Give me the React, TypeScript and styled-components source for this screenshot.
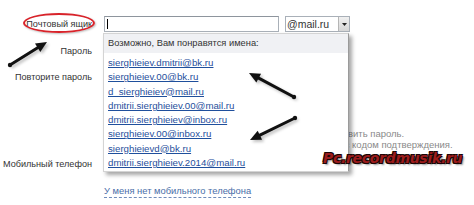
import React from 'react';
import styled, { createGlobalStyle } from 'styled-components';

const GlobalStyle = createGlobalStyle`
  html, body {
    margin: 0;
    padding: 0;
    background: #ffffff;
  }
  body {
    font-family: 'Liberation Sans', Arial, sans-serif;
  }
`;

const Page = styled.div`
  position: relative;
  width: 474px;
  height: 205px;
  overflow: hidden;
  background: #fff;
  color: #333;
  font-size: 10px;
`;

const Form = styled.div`
  display: flex;
  flex-direction: column;
  padding-top: 16px;
`;

const Row = styled.div<{ gap?: number }>`
  display: flex;
  align-items: center;
  height: 16px;
  margin-top: ${({ gap }) => (gap ? `${gap}px` : '0')};
`;

const Label = styled.div`
  width: 92px;
  text-align: right;
  font-size: 9.1px;
  color: #333;
  white-space: nowrap;
`;

const Field = styled.div`
  display: flex;
  align-items: center;
  gap: 6px;
  margin-left: 12px;
`;

const TextInput = styled.div`
  position: relative;
  box-sizing: border-box;
  width: 175px;
  height: 16px;
  border: 1px solid #a9b0b8;
  border-top-color: #8e959d;
  background: #fff;
`;

const Caret = styled.span`
  position: absolute;
  left: 2px;
  top: 2px;
  width: 1px;
  height: 10px;
  background: #000;
`;

const DomainSelect = styled.div`
  display: flex;
  box-sizing: border-box;
  width: 65px;
  height: 16px;
  border: 1px solid #a9b0b8;
  background: #fff;
`;

const DomainValue = styled.span`
  flex: 1;
  padding-left: 1px;
  font-size: 10.5px;
  line-height: 14px;
  color: #333;
`;

const SelectButton = styled.span`
  display: flex;
  align-items: center;
  justify-content: center;
  width: 10px;
  border-left: 1px solid #b5b5b5;
  background: linear-gradient(#f0f0f0, #d6d6d6);
`;

const Hint = styled.div`
  margin: 43px 0 0 104px;
  font-size: 9.5px;
  line-height: 11px;
  color: #8a8a8a;
  white-space: nowrap;
`;

const PhoneLink = styled.a`
  align-self: flex-start;
  margin: 13px 0 0 104px;
  font-size: 9.4px;
  line-height: 12px;
  color: #4a6ea8;
  text-decoration: none;
  border-bottom: 1px dashed #6f8cbc;
`;

const Suggest = styled.div`
  position: absolute;
  left: 103px;
  top: 33px;
  box-sizing: border-box;
  width: 246px;
  height: 139px;
  background: #fff;
  border: 1px solid #d4d4d4;
  border-right-color: #9a9a9a;
  box-shadow: 3px 3px 4px rgba(0, 0, 0, 0.35);
`;

const SuggestHead = styled.div`
  height: 19px;
  padding-left: 4px;
  background: #f0f1f4;
  font-size: 9.3px;
  line-height: 19px;
  color: #333;
`;

const SuggestList = styled.ul`
  list-style: none;
  margin: 0;
  padding: 3px 0 0 4px;
`;

const SuggestItem = styled.li`
  height: 14.3px;
  line-height: 14.3px;
`;

const SuggestLink = styled.a`
  font-size: 9.7px;
  color: #1f4f9c;
  text-decoration: underline;
`;

const Ellipse = styled.div`
  position: absolute;
  left: 23px;
  top: 13px;
  width: 72px;
  height: 20px;
  box-sizing: border-box;
  border: 2px solid #d8232a;
  border-radius: 50%;
  box-shadow: 1px 1px 2px rgba(0, 0, 0, 0.25);
`;

const Overlay = styled.svg`
  position: absolute;
  left: 0;
  top: 0;
  pointer-events: none;
`;

const Watermark = styled.div`
  position: absolute;
  left: 323px;
  top: 150px;
  font-family: 'DejaVu Sans', sans-serif;
  font-weight: bold;
  font-style: italic;
  font-size: 14px;
  letter-spacing: -0.3px;
  color: #9c1c1c;
  text-shadow: -1px -1px 0 #1a0505, 1px -1px 0 #1a0505, -1px 1px 0 #1a0505, 1px 1px 0 #1a0505,
    2px 2px 2px rgba(0, 0, 0, 0.45);
`;

const suggestions = [
  'sierghieiev.dmitrii@bk.ru',
  'sierghieiev.00@bk.ru',
  'd_sierghieiev@mail.ru',
  'dmitrii.sierghieiev.00@mail.ru',
  'dmitrii.sierghieiev@inbox.ru',
  'sierghieiev.00@inbox.ru',
  'sierghieievd@bk.ru',
  'dmitrii.sierghieiev.2014@mail.ru',
];

const arrows = [
  { x1: 10, y1: 65, x2: 47, y2: 42 },
  { x1: 294, y1: 97, x2: 249, y2: 73 },
  { x1: 295, y1: 118, x2: 250, y2: 140 },
];

function Arrow({ x1, y1, x2, y2 }: { x1: number; y1: number; x2: number; y2: number }) {
  const a = Math.atan2(y2 - y1, x2 - x1);
  const len = 11;
  const w = 5;
  const bx = x2 - Math.cos(a) * len;
  const by = y2 - Math.sin(a) * len;
  const px = -Math.sin(a) * w;
  const py = Math.cos(a) * w;
  const head = `${x2},${y2} ${bx + px},${by + py} ${bx - px},${by - py}`;
  return (
    <g>
      <g transform="translate(2 2)" opacity="0.25" filter="url(#blur)">
        <line x1={x1} y1={y1} x2={bx} y2={by} stroke="#000" strokeWidth={3} strokeLinecap="round" />
        <polygon points={head} fill="#000" />
      </g>
      <line x1={x1} y1={y1} x2={bx} y2={by} stroke="#111" strokeWidth={3} strokeLinecap="round" />
      <circle cx={x1} cy={y1} r={2.2} fill="#111" />
      <polygon points={head} fill="#111" />
    </g>
  );
}

export default function App() {
  return (
    <Page>
      <GlobalStyle />
      <Form>
        <Row>
          <Label>Почтовый ящик</Label>
          <Field>
            <TextInput>
              <Caret />
            </TextInput>
            <DomainSelect>
              <DomainValue>@mail.ru</DomainValue>
              <SelectButton>
                <svg width="5" height="3" viewBox="0 0 5 3">
                  <polygon points="0,0 5,0 2.5,3" fill="#222" />
                </svg>
              </SelectButton>
            </DomainSelect>
          </Field>
        </Row>
        <Row gap={11}>
          <Label>Пароль</Label>
          <Field>
            <TextInput />
          </Field>
        </Row>
        <Row gap={10}>
          <Label>Повторите пароль</Label>
          <Field>
            <TextInput />
          </Field>
        </Row>
        <Hint>
          С помощью телефона вы сможете мгновенно восстановить пароль.
          <br />
          На этот номер отправим бесплатное SMS-сообщение с кодом подтверждения.
        </Hint>
        <Row gap={6}>
          <Label>Мобильный телефон</Label>
          <Field>
            <TextInput />
          </Field>
        </Row>
        <PhoneLink href="#">У меня нет мобильного телефона</PhoneLink>
      </Form>

      <Suggest>
        <SuggestHead>Возможно, Вам понравятся имена:</SuggestHead>
        <SuggestList>
          {suggestions.map((s) => (
            <SuggestItem key={s}>
              <SuggestLink href="#">{s}</SuggestLink>
            </SuggestItem>
          ))}
        </SuggestList>
      </Suggest>

      <Ellipse />

      <Overlay width="474" height="205" viewBox="0 0 474 205">
        <defs>
          <filter id="blur" x="-20%" y="-20%" width="140%" height="140%">
            <feGaussianBlur stdDeviation="1.5" />
          </filter>
        </defs>
        {arrows.map((a, i) => (
          <Arrow key={i} {...a} />
        ))}
      </Overlay>

      <Watermark>Pc.recordmusik.ru</Watermark>
    </Page>
  );
}
